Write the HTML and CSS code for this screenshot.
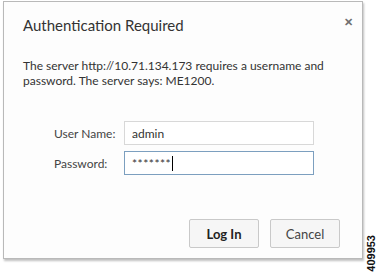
FILE: index.html
```html
<!DOCTYPE html>
<html lang="en">
<head>
  <meta charset="UTF-8" />
  <title>Authentication Required</title>
  <link rel="stylesheet" href="styles.css">
</head>
<body>
  <div class="page">
    <div class="dialog">
      <div class="header">
        <h1 class="title">Authentication Required</h1>
        <span class="close">&#x2715;</span>
      </div>

      <p class="message">The server http://10.71.134.173 requires a username and password. The server says: ME1200.</p>

      <!-- Credentials -->
      <form class="fields">
        <label class="row">
          <span class="label">User Name:</span>
          <input type="text" class="field" value="admin" />
        </label>
        <label class="row">
          <span class="label">Password:</span>
          <span class="field focused">*******<span class="caret"></span></span>
        </label>
      </form>

      <div class="actions">
        <button class="btn primary">Log In</button>
        <button class="btn">Cancel</button>
      </div>
    </div>
    <div class="figure-id">409953</div>
  </div>
</body>
</html>
```

FILE: styles.css
```css
body {
  margin: 0;
  background: #fff;
  font-family: Lato, "Open Sans", sans-serif;
  color: #333;
}

.page {
  display: flex;
  align-items: flex-start;
  padding: 1px 0 0 3px;
}

.dialog {
  width: 360px;
  height: 256px;
  background: #fdfdfd;
  border: 1px solid #b9b9b9;
  box-shadow: 1px 2px 2px rgba(0, 0, 0, 0.25);
  display: flex;
  flex-direction: column;
  box-sizing: content-box;
}

.header {
  display: flex;
  justify-content: space-between;
  align-items: flex-start;
  padding: 13px 9px 0 19px;
}

.title {
  margin: 1px 0 0;
  font-size: 15px;
  font-weight: normal;
  color: #333;
}

.close {
  font-size: 11px;
  font-weight: bold;
  color: #707070;
}

.message {
  margin: 24px 20px 0 19px;
  font-size: 12px;
  line-height: 15px;
  color: #333;
}

.fields {
  display: flex;
  flex-direction: column;
  gap: 6px;
  margin: 33px 0 0 50px;
}

.row {
  display: flex;
  align-items: center;
}

.label {
  width: 70px;
  font-size: 12px;
  color: #444;
}

.field {
  box-sizing: border-box;
  width: 190px;
  height: 24px;
  border: 1px solid #d8d8d8;
  background: #fff;
  font-family: inherit;
  font-size: 12px;
  color: #333;
  padding: 0 7px;
  display: flex;
  align-items: center;
}

.field.focused {
  border-color: #7c9fbf;
  letter-spacing: 0.5px;
}

.caret {
  display: inline-block;
  width: 1px;
  height: 15px;
  background: #000;
  margin-left: 1px;
}

.actions {
  display: flex;
  justify-content: flex-end;
  gap: 11px;
  margin-top: auto;
  padding: 0 22px 10px 0;
}

.btn {
  width: 70px;
  height: 29px;
  background: #f6f6f6;
  border: 1px solid #c9c9c9;
  border-radius: 2px;
  font-family: inherit;
  font-size: 13px;
  color: #444;
}

.btn.primary {
  font-weight: bold;
  color: #222;
}

.figure-id {
  writing-mode: vertical-rl;
  transform: rotate(180deg);
  font-size: 11px;
  font-weight: bold;
  font-family: "Liberation Sans", Arial, sans-serif;
  margin: 234px 0 0 2px;
  color: #111;
}
```
